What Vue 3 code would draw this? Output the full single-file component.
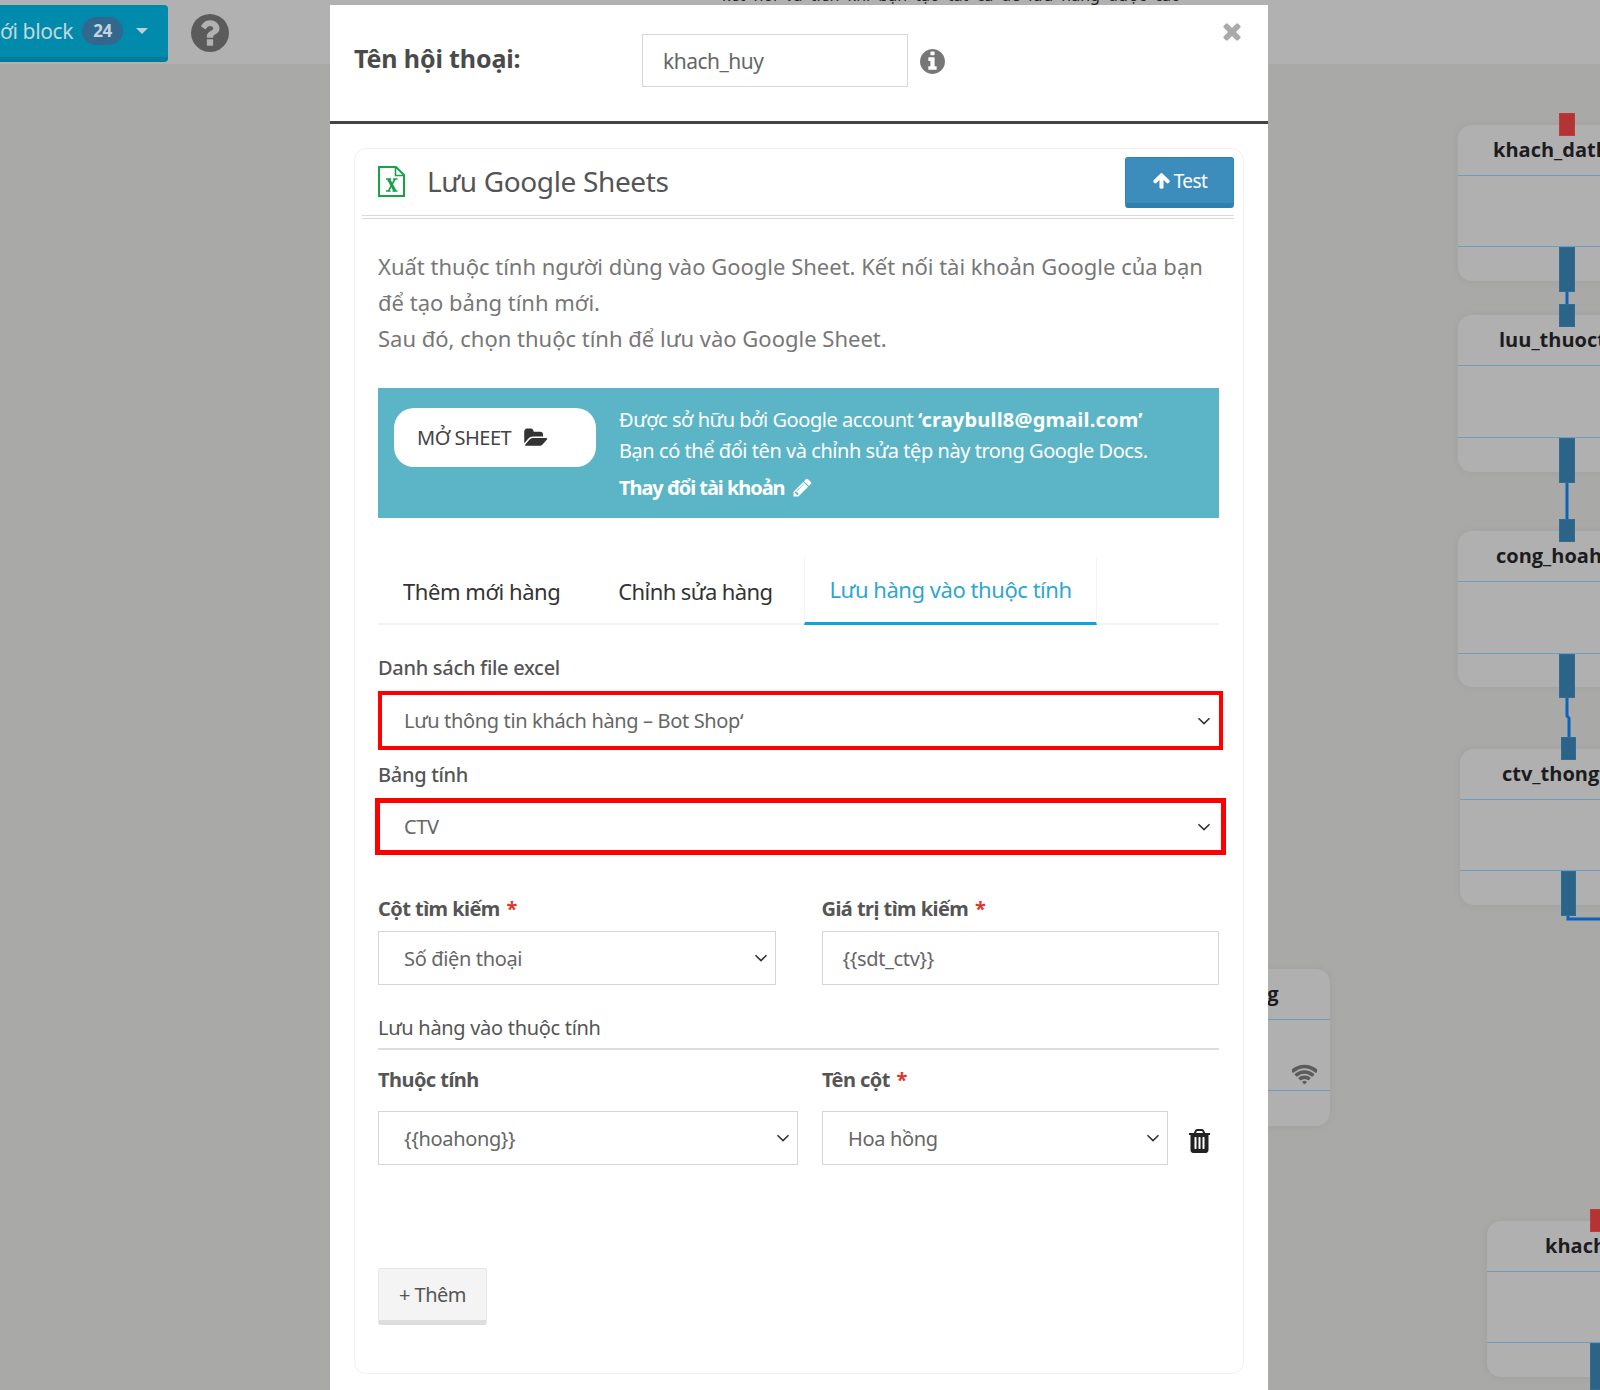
<script setup>
const icons = {
  question: 'M1024 1376v-192q0-14-9-23t-23-9h-192q-14 0-23 9t-9 23v192q0 14 9 23t23 9h192q14 0 23-9t9-23zm256-672q0-88-55.5-163t-138.5-116-170-41q-243 0-371 213-15 24 8 42l132 100q7 6 19 6 16 0 25-12 53-68 86-92 34-24 86-24 48 0 85.5 26t37.5 59q0 38-20 61t-68 45q-63 28-115.5 86.5t-52.5 125.5v36q0 14 9 23t23 9h192q14 0 23-9t9-23q0-19 21.5-49.5t54.5-49.5q32-18 49-28.5t46-35 44.5-48 28-60.5 12.5-81zm384 192q0 209-103 385.5t-279.5 279.5-385.5 103-385.5-103-279.5-279.5-103-385.5 103-385.5 279.5-279.5 385.5-103 385.5 103 279.5 279.5 103 385.5z',
  info: 'M1152 1376v-160q0-14-9-23t-23-9h-96v-512q0-14-9-23t-23-9h-320q-14 0-23 9t-9 23v160q0 14 9 23t23 9h96v320h-96q-14 0-23 9t-9 23v160q0 14 9 23t23 9h448q14 0 23-9t9-23zm-128-896v-160q0-14-9-23t-23-9h-192q-14 0-23 9t-9 23v160q0 14 9 23t23 9h192q14 0 23-9t9-23zm640 416q0 209-103 385.5t-279.5 279.5-385.5 103-385.5-103-279.5-279.5-103-385.5 103-385.5 279.5-279.5 385.5-103 385.5 103 279.5 279.5 103 385.5z',
  times: 'M1490 1322q0 40-28 68l-136 136q-28 28-68 28t-68-28l-294-294-294 294q-28 28-68 28t-68-28l-136-136q-28-28-28-68t28-68l294-294-294-294q-28-28-28-68t28-68l136-136q28-28 68-28t68 28l294 294 294-294q28-28 68-28t68 28l136 136q28 28 28 68t-28 68l-294 294 294 294q28 28 28 68z',
  up: 'M1675 971q0 51-37 90l-75 75q-38 38-91 38-54 0-90-38l-294-293v704q0 52-37.5 84.5t-90.5 32.5h-128q-53 0-90.5-32.5t-37.5-84.5v-704l-294 293q-36 38-90 38t-90-38l-75-75q-38-38-38-90 0-53 38-91l651-651q35-37 90-37 54 0 91 37l651 651q37 39 37 91z',
  folder: 'M1879 952q0 31-31 66l-336 396q-43 51-120.5 86.5t-143.5 35.5h-1088q-34 0-60.5-13t-26.5-43q0-31 31-66l336-396q43-51 120.5-86.5t143.5-35.5h1088q34 0 60.5 13t26.5 43zm-343-344v160h-832q-94 0-197 47.5t-164 119.5l-337 396-5 6q0-4-.5-12.5t-.5-12.5v-960q0-92 66-158t158-66h320q92 0 158 66t66 158v32h544q92 0 158 66t66 158z',
  pencil: 'M491 1536l91-91-235-235-91 91v107h128v128h107zm523-928q0-22-22-22-10 0-17 7l-542 542q-7 7-7 17 0 22 22 22 10 0 17-7l542-542q7-7 7-17zm-54-192l416 416-832 832h-416v-416zm683 96q0 53-37 90l-166 166-416-416 166-165q36-38 90-38 53 0 91 38l235 234q37 39 37 91z',
  trash: 'M704 1376v-704q0-14-9-23t-23-9h-64q-14 0-23 9t-9 23v704q0 14 9 23t23 9h64q14 0 23-9t9-23zm256 0v-704q0-14-9-23t-23-9h-64q-14 0-23 9t-9 23v704q0 14 9 23t23 9h64q14 0 23-9t9-23zm256 0v-704q0-14-9-23t-23-9h-64q-14 0-23 9t-9 23v704q0 14 9 23t23 9h64q14 0 23-9t9-23zm-544-992h448l-48-117q-7-9-17-11h-317q-10 2-17 11zm928 32v64q0 14-9 23t-23 9h-96v948q0 83-47 143.5t-113 60.5h-832q-66 0-113-58.5t-47-141.5v-952h-96q-14 0-23-9t-9-23v-64q0-14 9-23t23-9h309l70-167q15-37 54-63t79-26h320q40 0 79 26t54 63l70 167h309q14 0 23 9t9 23z',
  wifi: 'M896 1523q-20 0-93-73.5t-73-93.5q0-32 62.5-54t103.5-22 103.5 22 62.5 54q0 20-73 93.5t-93 73.5zm270-271q-2 0-40-25t-101.5-50-128.5-25-128.5 25-101 50-40.5 25q-18 0-93.5-75t-75.5-93q0-13 10-23 78-77 196-121t233-44 233 44 196 121q10 10 10 23 0 18-75.5 93t-93.5 75zm273-272q-11 0-23-8-136-105-252-154.5t-268-49.5q-85 0-170.5 22t-149 53-113.5 62-79 53-31 22q-17 0-92-75t-75-93q0-12 10-22 132-132 320-205t380-73 380 73 320 205q10 10 10 22 0 18-75 93t-92 75zm271-271q-11 0-22-9-179-157-371.5-236.5t-420.5-79.5-420.5 79.5-371.5 236.5q-11 9-22 9-17 0-92.5-75t-75.5-93q0-13 10-23 187-186 445-288t527-102 527 102 445 288q10 10 10 23 0 18-75.5 93t-92.5 75z'
}
const nodes = [
  { id: 'a', name: 'khach_dathang', x: 1458, y: 125, w: 300, h1: 51, h2: 71, h3: 34, tx: 35 },
  { id: 'b', name: 'luu_thuoctinh', x: 1458, y: 315, w: 300, h1: 51, h2: 72, h3: 34, tx: 41 },
  { id: 'c', name: 'cong_hoahong', x: 1458, y: 531, w: 300, h1: 51, h2: 72, h3: 33, tx: 38 },
  { id: 'd', name: 'ctv_thongtin', x: 1460, y: 749, w: 300, h1: 51, h2: 71, h3: 34, tx: 42 },
  { id: 'e', name: 'thong', x: 1030, y: 969, w: 300, h1: 51, h2: 71, h3: 35, tx: 190 },
  { id: 'f', name: 'khach_huy', x: 1487, y: 1221, w: 300, h1: 51, h2: 71, h3: 34, tx: 58 }
]
const ports = [
  { x: 1559, y: 113, w: 16, h: 23, c: 'red' },
  { x: 1559, y: 247, w: 16, h: 45 },
  { x: 1559, y: 304, w: 16, h: 23 },
  { x: 1559, y: 438, w: 16, h: 45 },
  { x: 1559, y: 519, w: 16, h: 23 },
  { x: 1559, y: 654, w: 16, h: 44 },
  { x: 1561, y: 737, w: 15, h: 23 },
  { x: 1561, y: 871, w: 15, h: 45 },
  { x: 1590, y: 1209, w: 16, h: 23, c: 'red' },
  { x: 1590, y: 1343, w: 16, h: 47 }
]
const box = (o) => ({ left: o.x + 'px', top: o.y + 'px', width: o.w + 'px', height: o.h + 'px' })
</script>

<template>
  <div class="page">
    <div class="topbar">
      <div class="newblock">
        <span class="nb-text">ới block</span>
        <span class="badge">24</span>
        <span class="caret"></span>
      </div>
      <svg class="help" viewBox="128 128 1536 1536"><path :d="icons.question" /></svg>
    </div>
    <div class="behind-text">kết nối và tiến khi bạn tạo tất cả để lưu hằng được các</div>

    <div class="canvas">
      <div v-for="n in nodes" :key="n.id" class="node" :style="{ left: n.x + 'px', top: n.y + 'px', width: n.w + 'px' }">
        <div class="node-head" :style="{ height: n.h1 + 'px', paddingLeft: n.tx + 'px' }">{{ n.name }}</div>
        <div class="node-body" :style="{ height: n.h2 + 'px' }">
          <svg v-if="n.id === 'e'" class="wifi" viewBox="0 0 1792 1792"><path :d="icons.wifi" /></svg>
        </div>
        <div :style="{ height: n.h3 + 'px' }"></div>
      </div>
      <svg class="wires" width="1600" height="1390" viewBox="0 0 1600 1390">
        <g fill="none" stroke="#0b63c0" stroke-width="3">
          <path d="M1567 292V304" />
          <path d="M1567 483V519" />
          <path d="M1567 698V716L1569 718V737" />
          <path d="M1568 916V919H1600" />
        </g>
      </svg>
      <div v-for="(p, i) in ports" :key="i" class="port" :class="p.c" :style="box(p)"></div>
    </div>

    <div class="modal">
      <header class="m-head">
        <h2 class="m-title">Tên hội thoại:</h2>
        <input class="m-input" value="khach_huy" />
        <svg class="m-info" viewBox="128 128 1536 1536"><path :d="icons.info" /></svg>
        <svg class="m-close" viewBox="0 0 1792 1792"><path :d="icons.times" /></svg>
      </header>

      <section class="card">
        <div class="card-head">
          <svg class="xls" viewBox="0 0 27 31" fill="none" stroke="#17a34a" stroke-width="2">
            <path d="M1 1H18L26 9V30H1Z" />
            <path d="M17.5 1V9.5H26" stroke-width="1.6" />
            <path d="M10.5 13L17 25" stroke-width="3" />
            <path d="M17 13L10.5 25" stroke-width="1.6" />
            <path d="M8 13H13M15 13H19.5M8 25H12.5M14.5 25H19.5" stroke-width="1.5" />
          </svg>
          <h3 class="card-title">Lưu Google Sheets</h3>
          <button class="test"><svg viewBox="0 0 1792 1792"><path :d="icons.up" /></svg>Test</button>
        </div>

        <div class="card-body">
          <p class="desc">Xuất thuộc tính người dùng vào Google Sheet. Kết nối tài khoản Google của bạn<br />để tạo bảng tính mới.<br />Sau đó, chọn thuộc tính để lưu vào Google Sheet.</p>

          <div class="notice">
            <button class="open">MỞ SHEET <svg viewBox="0 0 1920 1792"><path :d="icons.folder" /></svg></button>
            <div class="notice-text">
              <div>Được sở hữu bởi Google account <b>‘craybull8@gmail.com’</b></div>
              <div>Bạn có thể đổi tên và chỉnh sửa tệp này trong Google Docs.</div>
              <div class="change"><b>Thay đổi tài khoản</b> <svg viewBox="0 0 1792 1792"><path :d="icons.pencil" /></svg></div>
            </div>
          </div>

          <nav class="tabs">
            <a class="tab">Thêm mới hàng</a>
            <a class="tab">Chỉnh sửa hàng</a>
            <a class="tab active">Lưu hàng vào thuộc tính</a>
          </nav>

          <div class="f-label first">Danh sách file excel</div>
          <select class="ctl red r1"><option>Lưu thông tin khách hàng – Bot Shop‘</option></select>
          <div class="f-label second">Bảng tính</div>
          <select class="ctl red r2"><option>CTV</option></select>

          <div class="row search">
            <div class="col">
              <div class="f-label strong">Cột tìm kiếm <i>*</i></div>
              <select class="ctl"><option>Số điện thoại</option></select>
            </div>
            <div class="col">
              <div class="f-label strong">Giá trị tìm kiếm <i>*</i></div>
              <input class="ctl txt" value="{{sdt_ctv}}" />
            </div>
          </div>

          <div class="section">Lưu hàng vào thuộc tính</div>

          <div class="row map-labels">
            <div class="f-label strong c1">Thuộc tính</div>
            <div class="f-label strong">Tên cột <i>*</i></div>
          </div>
          <div class="row map">
            <select class="ctl c1"><option v-pre>{{hoahong}}</option></select>
            <select class="ctl c2"><option>Hoa hồng</option></select>
            <svg class="trash" viewBox="224 128 1344 1536"><path :d="icons.trash" /></svg>
          </div>

          <button class="add">+ Thêm</button>
        </div>
      </section>
    </div>
  </div>
</template>

<style>
html, body { margin: 0; padding: 0; }
</style>

<style scoped>
.page {
  position: relative;
  width: 1600px;
  height: 1390px;
  overflow: hidden;
  background: #a9a9a7;
  font-family: "Noto Sans", "Open Sans", sans-serif;
  color: #555;
}
.topbar {
  height: 64px;
  background: #b1b1b1;
  display: flex;
  align-items: flex-start;
}
.newblock {
  width: 168px;
  height: 52px;
  margin-top: 5px;
  box-sizing: content-box;
  background: #008bac;
  border-bottom: 5px solid #007b99;
  border-radius: 0 4px 4px 0;
  display: flex;
  align-items: center;
  color: #c4d6da;
  font-size: 21px;
  letter-spacing: -0.4px;
}
.nb-text { margin-left: 0; white-space: nowrap; }
.badge {
  margin-left: 9px;
  width: 41px;
  height: 28px;
  border-radius: 14px;
  background: #33688e;
  color: #c8d4dc;
  font-size: 17px;
  font-weight: 700;
  text-align: center;
  line-height: 28px;
}
.caret {
  margin-left: 13px;
  border: 6px solid transparent;
  border-top: 6px solid #bcd0d6;
  border-bottom: 0;
}
.help { width: 38px; height: 38px; margin: 14px 0 0 23px; fill: #5b5b5b; }
.behind-text {
  position: absolute;
  left: 722px;
  top: -16px;
  font-size: 16px;
  word-spacing: 4px;
  color: #222;
  white-space: nowrap;
}
.canvas { position: absolute; inset: 0; }
.wires { position: absolute; left: 0; top: 0; }
.node {
  position: absolute;
  box-sizing: border-box;
  background: #b0b0b0;
  border-radius: 14px;
  box-shadow: 0 0 8px rgba(0, 0, 0, 0.06);
}
.node-head {
  box-sizing: border-box;
  border-bottom: 1px solid #6d9fba;
  color: #1c1c20;
  font-family: "Open Sans", sans-serif;
  font-weight: 700;
  font-size: 20px;
  line-height: 50px;
  white-space: nowrap;
  overflow: hidden;
}
.node-body {
  box-sizing: border-box;
  border-bottom: 1px solid #6d9fba;
  position: relative;
}
.wifi { position: absolute; left: 262px; top: 43px; width: 25px; height: 25px; fill: #5c5c5c; }
.port { position: absolute; background: #2b6487; box-shadow: inset 0 0 0 1px #2f6d94; }
.port.red { background: #b43435; box-shadow: inset 0 0 0 1px #c23a3c; }

.modal {
  position: absolute;
  left: 330px;
  top: 5px;
  width: 938px;
  height: 1385px;
  background: #fff;
  overflow: hidden;
}
.m-head {
  position: relative;
  height: 116px;
  border-bottom: 3px solid #444;
  display: flex;
  align-items: flex-start;
}
.m-title {
  margin: 36px 0 0 24px;
  width: 288px;
  font-size: 25px;
  line-height: 34px;
  font-weight: 700;
  color: #4a4a4a;
  letter-spacing: -0.14px;
}
.m-input {
  box-sizing: border-box;
  width: 266px;
  height: 53px;
  margin-top: 29px;
  padding: 0 20px;
  border: 1px solid #d2d6de;
  border-radius: 0;
  outline: none;
  font: 21px "Noto Sans", sans-serif;
  letter-spacing: -0.5px;
  color: #666;
}
.m-info { width: 25px; height: 25px; margin: 44px 0 0 12px; fill: #777; }
.m-close { position: absolute; right: 23px; top: 13px; width: 26px; height: 26px; fill: #aaa; }

.card {
  box-sizing: border-box;
  width: 890px;
  height: 1226px;
  margin: 24px 0 0 24px;
  border: 1px solid #eef0f3;
  border-radius: 12px;
  padding: 8px 8px 0 7px;
}
.card-head {
  height: 58px;
  padding-left: 16px;
  display: flex;
  align-items: flex-start;
  border-bottom: 4px double #d9d9d9;
  margin-right: 1px;
}
.xls { width: 27px; height: 31px; margin-top: 9px; flex: none; }
.card-title {
  margin: 4px 0 0 22px;
  flex: 1;
  font-size: 28px;
  line-height: 40px;
  font-weight: 400;
  color: #555;
  letter-spacing: -0.36px;
}
.test {
  box-sizing: border-box;
  width: 109px;
  height: 51px;
  border: 1px solid #2e86b5;
  border-bottom: 5px solid #2f7fae;
  border-radius: 3px;
  background: #3c8dbc;
  color: #fff;
  font: 19px "Noto Sans", sans-serif;
  letter-spacing: -0.6px;
  display: flex;
  align-items: center;
  justify-content: center;
  gap: 3px;
  padding: 0;
}
.test svg { width: 19px; height: 19px; fill: #fff; }

.card-body { padding: 0 16px; }
.desc {
  margin: 29px 0 0;
  font-size: 22px;
  line-height: 36px;
  color: #777;
  letter-spacing: 0;
  white-space: nowrap;
}
.notice {
  margin-top: 32px;
  height: 130px;
  width: 841px;
  box-sizing: border-box;
  background: #5bb5c6;
  display: flex;
  align-items: flex-start;
  padding: 20px 16px 0;
  color: #fff;
}
.open {
  box-sizing: border-box;
  width: 202px;
  height: 59px;
  flex: none;
  background: #fff;
  border: none;
  border-radius: 20px;
  color: #444;
  font: 20px "Noto Sans", sans-serif;
  letter-spacing: -0.5px;
  display: flex;
  align-items: center;
  justify-content: flex-start;
  gap: 13px;
  padding: 0 0 0 23px;
}
.open svg { width: 24px; height: 22px; fill: #333; }
.notice-text {
  margin: -4px 0 0 23px;
  font-size: 20px;
  line-height: 31px;
  letter-spacing: -0.45px;
  white-space: nowrap;
}
.notice-text b { letter-spacing: 0.2px; }
.change { margin-top: 6px; display: flex; align-items: center; gap: 7px; }
.change b { letter-spacing: -1.05px; }
.change svg { width: 21px; height: 21px; fill: #fff; }
.tabs {
  margin-top: 39px;
  height: 66px;
  width: 841px;
  display: flex;
  border-bottom: 2px solid #f4f4f4;
}
.tab {
  box-sizing: border-box;
  height: 66px;
  padding: 0 25px;
  font-size: 22px;
  line-height: 68px;
  color: #333;
  letter-spacing: -0.45px;
  white-space: nowrap;
}
.tab + .tab { padding: 0 32px 0 33px; letter-spacing: -0.6px; }
.tab.active {
  padding: 0 24px;
  height: 68px;
  line-height: 64px;
  color: #2ea7d0;
  letter-spacing: -0.45px;
  border-left: 1px solid #f4f4f4;
  border-right: 1px solid #f4f4f4;
  border-bottom: 3px solid #10a5d8;
}
.f-label {
  font-size: 20px;
  line-height: 30px;
  color: #555;
  letter-spacing: -0.3px;
  font-weight: 500;
  white-space: nowrap;
}
.f-label.strong { font-weight: 700; letter-spacing: -0.55px; }
.f-label i { font-style: normal; color: #d9392b; margin-left: 2px; }
.f-label.first { margin-top: 28px; }
.ctl {
  display: block;
  box-sizing: border-box;
  width: 100%;
  height: 54px;
  padding: 0 0 0 25px;
  border: 1px solid #d2d6de;
  border-radius: 0;
  background: #fff;
  outline: none;
  font: 20px "Noto Sans", sans-serif;
  letter-spacing: -0.35px;
  color: #666;
}
select.ctl {
  appearance: none;
  -webkit-appearance: none;
  background-image: url("data:image/svg+xml,%3Csvg xmlns='http://www.w3.org/2000/svg' width='14' height='8' viewBox='0 0 14 8'%3E%3Cpath d='M1.5 1.2L7 6.6L12.5 1.2' fill='none' stroke='%23333' stroke-width='1.6'/%3E%3C/svg%3E");
  background-repeat: no-repeat;
  background-position: right 7px center;
}
.ctl.txt { padding-left: 20px; }
.ctl.red { border-color: #f00; }
.ctl.r1 { width: 845px; height: 59px; margin-top: 8px; border-width: 4px; padding-left: 22px; background-position: right 8px center; }
.f-label.second { margin-top: 10px; }
.ctl.r2 { width: 851px; height: 57px; margin: 8px 0 0 -3px; border-width: 5px; padding-left: 24px; background-position: right 10px center; }
.row { display: flex; gap: 46px; width: 841px; }
.search { margin-top: 39px; }
.col { flex: 1; min-width: 0; }
.col .f-label { margin-bottom: 7px; }
.section {
  margin-top: 28px;
  width: 841px;
  height: 35px;
  font-size: 20px;
  line-height: 30px;
  color: #555;
  letter-spacing: -0.3px;
  border-bottom: 2px solid #ddd;
  box-sizing: content-box;
}
.map-labels { margin-top: 15px; gap: 0; }
.map-labels .c1 { width: 444px; }
.map { margin-top: 16px; gap: 0; align-items: center; }
.map .c1 { width: 420px; margin-right: 24px; }
.map .c2 { width: 346px; padding-left: 25px; }
.trash { width: 21px; height: 24px; margin: 5px 0 0 21px; flex: none; fill: #222; }
.add {
  display: block;
  box-sizing: border-box;
  width: 109px;
  height: 57px;
  margin-top: 103px;
  background: #f4f4f4;
  border: 1px solid #e6e6e6;
  border-bottom: 5px solid #ddd;
  border-radius: 3px;
  color: #555;
  font: 20px "Noto Sans", sans-serif;
  letter-spacing: -0.5px;
  padding: 0;
}
</style>
